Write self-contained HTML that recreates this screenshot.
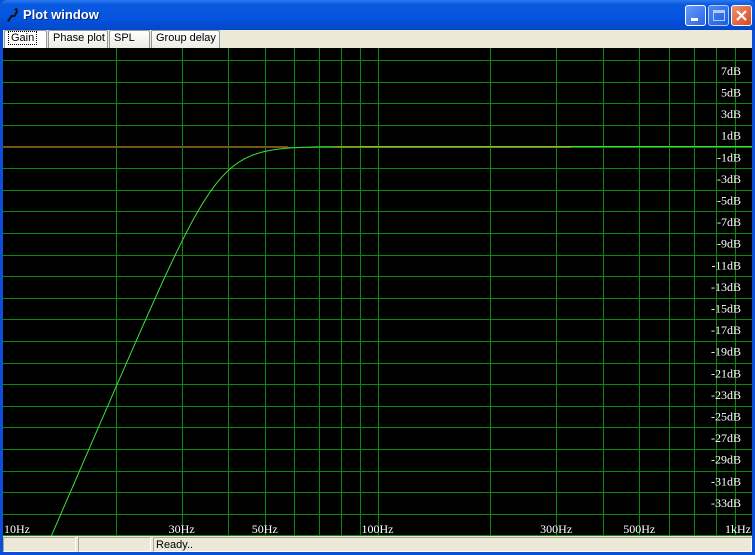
<!DOCTYPE html>
<html><head><meta charset="utf-8"><style>
*{margin:0;padding:0;box-sizing:border-box}
body{width:755px;height:555px;overflow:hidden;background:#0a4fd8;font-family:"Liberation Sans",sans-serif;position:relative}
#title{position:absolute;left:0;top:0;width:755px;height:30px;background:linear-gradient(#2a7bf0 0%,#0a5ae0 15%,#0454e0 60%,#0348c8 100%);border-radius:7px 7px 0 0}
#title span{position:absolute;left:23px;top:7px;color:#fff;font-weight:bold;font-size:13px;text-shadow:1px 1px #0a2a80}
.btn{position:absolute;top:5px;width:21px;height:21px;border:1px solid #fff;border-radius:3px;background:linear-gradient(135deg,#6a9cf8,#2a64e8)}
#client{position:absolute;left:3px;top:30px;width:749px;height:522px;background:#ece9d8}
.tab{position:absolute;top:0;height:18px;border:1px solid #919b9c;border-bottom:none;background:linear-gradient(#fff,#ecebe5);font-size:11px;padding:1px 0 0 4px;border-radius:2px 2px 0 0}
#status div{position:absolute;top:507px;height:15px;border:1px solid #aca899;border-right-color:#fff;border-bottom-color:#fff;font-size:11px;padding:1px 0 0 2px}
svg text{font-family:"Liberation Serif",serif;font-size:12px;fill:#fff}
</style></head><body>
<div id="title"><svg style="position:absolute;left:5px;top:7px" width="14" height="16"><path d="M2 14 L6 8 L9 8 L11 4 L9 2 L12 1 L13 5 L10 10 L7 10 L4 15Z" fill="#111"/></svg><span>Plot window</span>
<div class="btn" style="left:685px"><div style="position:absolute;left:5px;top:12px;width:7px;height:3px;background:#fff"></div></div>
<div class="btn" style="left:708px;opacity:.7"><div style="position:absolute;left:4px;top:4px;width:12px;height:11px;border:1px solid #fff;border-top-width:3px"></div></div>
<div class="btn" style="left:731px;background:linear-gradient(135deg,#f09070,#d84820)"><svg width="19" height="19"><path d="M5 5L14 14M14 5L5 14" stroke="#fff" stroke-width="2.2"/></svg></div>
</div>
<div id="client">
<div class="tab" style="left:1px;width:43px;background:#fff;border-color:#919b9c"><span style="outline:1px dotted #000;padding:0 2px">Gain</span></div>
<div class="tab" style="left:45px;width:60px">Phase plot</div>
<div class="tab" style="left:106px;width:41px">SPL</div>
<div class="tab" style="left:148px;width:69px">Group delay</div>
<svg id="plot" style="position:absolute;left:0;top:18px" width="749" height="488"></svg>
<div id="status"><div style="left:0;width:73px"></div><div style="left:75px;width:73px"></div><div style="left:150px;width:599px">Ready..</div></div>
</div>
<script>
var s=document.getElementById('plot'),h='<rect width="749" height="488" fill="#000"/>';
var x0=0,dec=374.5,y0=98.5,pd=10.8;
function X(f){return x0+Math.log10(f/10)*dec}
function Y(d){return y0-d*pd}
var fs=[];for(var f=20;f<=100;f+=10)fs.push(f);for(f=200;f<=900;f+=100)fs.push(f);
fs.forEach(function(f){var x=Math.round(X(f))+.5;h+='<line x1="'+x+'" y1="0" x2="'+x+'" y2="488" stroke="#0a8a0a"/>'});
for(var d=8;d>=-36;d-=2){var y=Math.round(Y(d))+.5;h+='<line x1="0" y1="'+y+'" x2="749" y2="'+y+'" stroke="#0a8a0a"/>'}
for(d=7;d>=-33;d-=2){h+='<text x="738" y="'+(Y(d)+4)+'" text-anchor="end">'+d+'dB</text>'}
[[10,'10Hz',1],[30,'30Hz',0],[50,'50Hz',0],[100,'100Hz',0],[300,'300Hz',0],[500,'500Hz',0],[1000,'1kHz',2]].forEach(function(a){var x=X(a[0]);var anc=a[2]==1?'start':a[2]==2?'end':'middle';if(a[2]==1)x=1;if(a[2]==2)x=748;h+='<text x="'+x+'" y="485" text-anchor="'+anc+'">'+a[1]+'</text>'});
h+='<line x1="0" y1="'+Y(0)+'" x2="285" y2="'+Y(0)+'" stroke="#e02020"/>';
var p='';for(var px=0;px<=749;px++){var f=10*Math.pow(10,px/dec);var g=-10*Math.log10(1+Math.pow(38/f,8));var y=Y(g);if(y>490)continue;p+=(p?'L':'M')+px+' '+y.toFixed(1)}
h+='<path d="'+p+'" fill="none" stroke="#40e040"/>';
h+='<line x1="330" y1="'+(Y(0)+.5)+'" x2="568" y2="'+(Y(0)+.5)+'" stroke="#b8a020"/>';
s.innerHTML=h;
</script>
</body></html>
